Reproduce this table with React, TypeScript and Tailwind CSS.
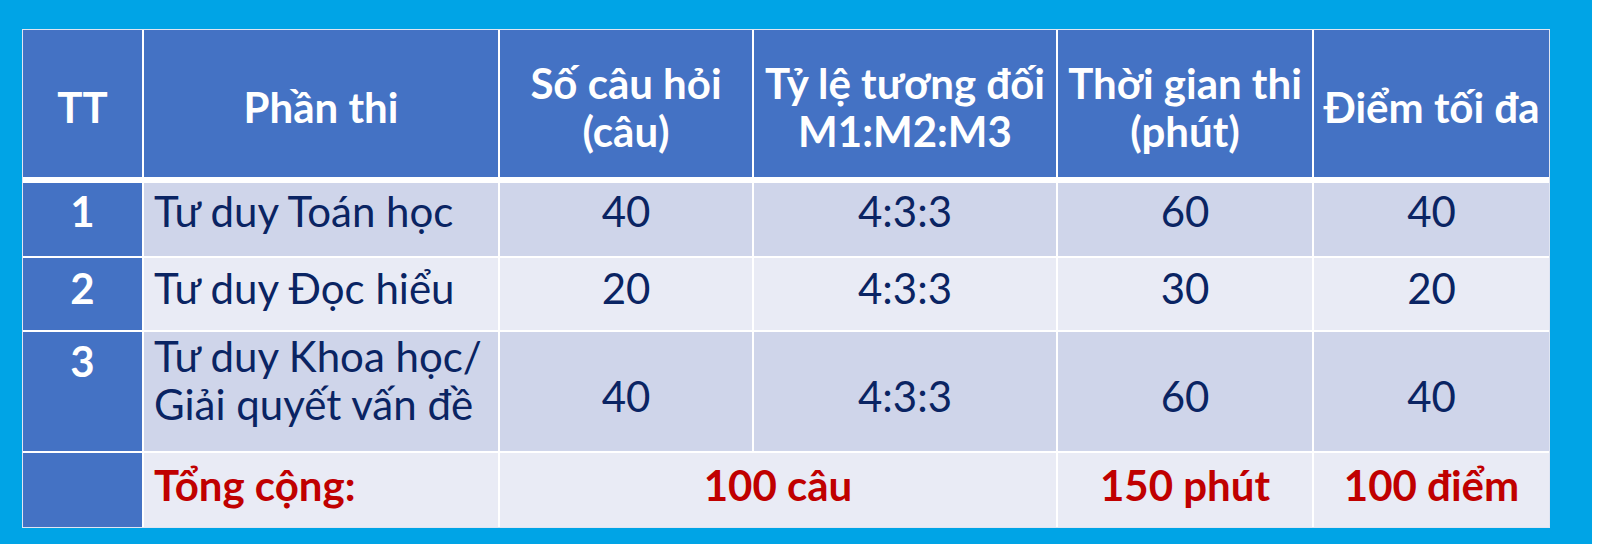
import React from 'react';

// ── Exam structure table ─────────────────────────────────────────────────────

const font = { fontFamily: 'Lato, "Noto Sans", sans-serif' };

type Row = {
  tt: string;
  part: string[];
  questions: string;
  ratio: string;
  minutes: string;
  points: string;
  h: string;
  bg: string;
  pt: string;
  numPt: string;
  ttPt: string;
  numCenter: boolean;
};

const rows: Row[] = [
  { tt: '1', part: ['Tư duy Toán học'], questions: '40', ratio: '4:3:3', minutes: '60', points: '40', h: 'h-[73px]', bg: 'bg-[#cfd5ea]', pt: 'pt-[4px]', numPt: 'pt-[4px]', ttPt: 'pt-[4px]', numCenter: false },
  { tt: '2', part: ['Tư duy Đọc hiểu'], questions: '20', ratio: '4:3:3', minutes: '30', points: '20', h: 'h-[72px]', bg: 'bg-[#e9ebf5]', pt: 'pt-[6px]', numPt: 'pt-[6px]', ttPt: 'pt-[6px]', numCenter: false },
  { tt: '3', part: ['Tư duy Khoa học/', 'Giải quyết vấn đề'], questions: '40', ratio: '4:3:3', minutes: '60', points: '40', h: 'h-[119px]', bg: 'bg-[#cfd5ea]', pt: 'pt-0', numPt: 'pt-[8px]', ttPt: 'pt-[5px]', numCenter: true },
];

const cols = 'grid grid-cols-[119px_354px_252px_302px_254px_235px] gap-x-[2px]';

function Head({ children }: { children: React.ReactNode }) {
  return (
    <div className="flex items-center justify-center bg-[#4472c4] pt-[6px] text-center text-[42px] font-bold leading-[48px] text-white">
      <div>{children}</div>
    </div>
  );
}

export default function App() {
  return (
    <div className="flex h-[544px] w-[1600px] bg-white" style={font}>
      <div className="h-full w-[1592px] bg-[#00a4e6] pl-[22px] pt-[29px]">
        <div className="w-[1528px] border border-[#dfe5f2] bg-white">
          <div className={`${cols} h-[147px]`}>
            <Head>TT</Head>
            <Head>Phần thi</Head>
            <Head>Số câu hỏi<br />(câu)</Head>
            <Head>Tỷ lệ tương đối<br />M1:M2:M3</Head>
            <Head>Thời gian thi<br />(phút)</Head>
            <Head>Điểm tối đa</Head>
          </div>

          <div className="flex flex-col gap-y-[2px] pt-[6px] text-[42px] leading-[48px] text-[#0a2463]">
            {rows.map(r => (
              <div key={r.tt} className={`${cols} ${r.h}`}>
                <div className={`bg-[#4472c4] text-center font-bold text-white ${r.ttPt}`}>{r.tt}</div>
                <div className={`${r.bg} pl-[10px] ${r.pt}`}>
                  {r.part.map(l => <div key={l}>{l}</div>)}
                </div>
                {[r.questions, r.ratio, r.minutes, r.points].map((v, i) => (
                  <div
                    key={i}
                    className={`${r.bg} flex justify-center ${r.numCenter ? 'items-center' : 'items-start'} ${r.numPt}`}
                  >
                    {v}
                  </div>
                ))}
              </div>
            ))}

            <div className={`${cols} h-[74px] font-bold text-[#c00000]`}>
              <div className="bg-[#4472c4]" />
              <div className="bg-[#e9ebf5] pl-[10px] pt-[8px]">Tổng cộng:</div>
              <div className="col-span-2 bg-[#e9ebf5] pt-[8px] text-center">100 câu</div>
              <div className="bg-[#e9ebf5] pt-[8px] text-center">150 phút</div>
              <div className="bg-[#e9ebf5] pt-[8px] text-center">100 điểm</div>
            </div>
          </div>
        </div>
      </div>
    </div>
  );
}
